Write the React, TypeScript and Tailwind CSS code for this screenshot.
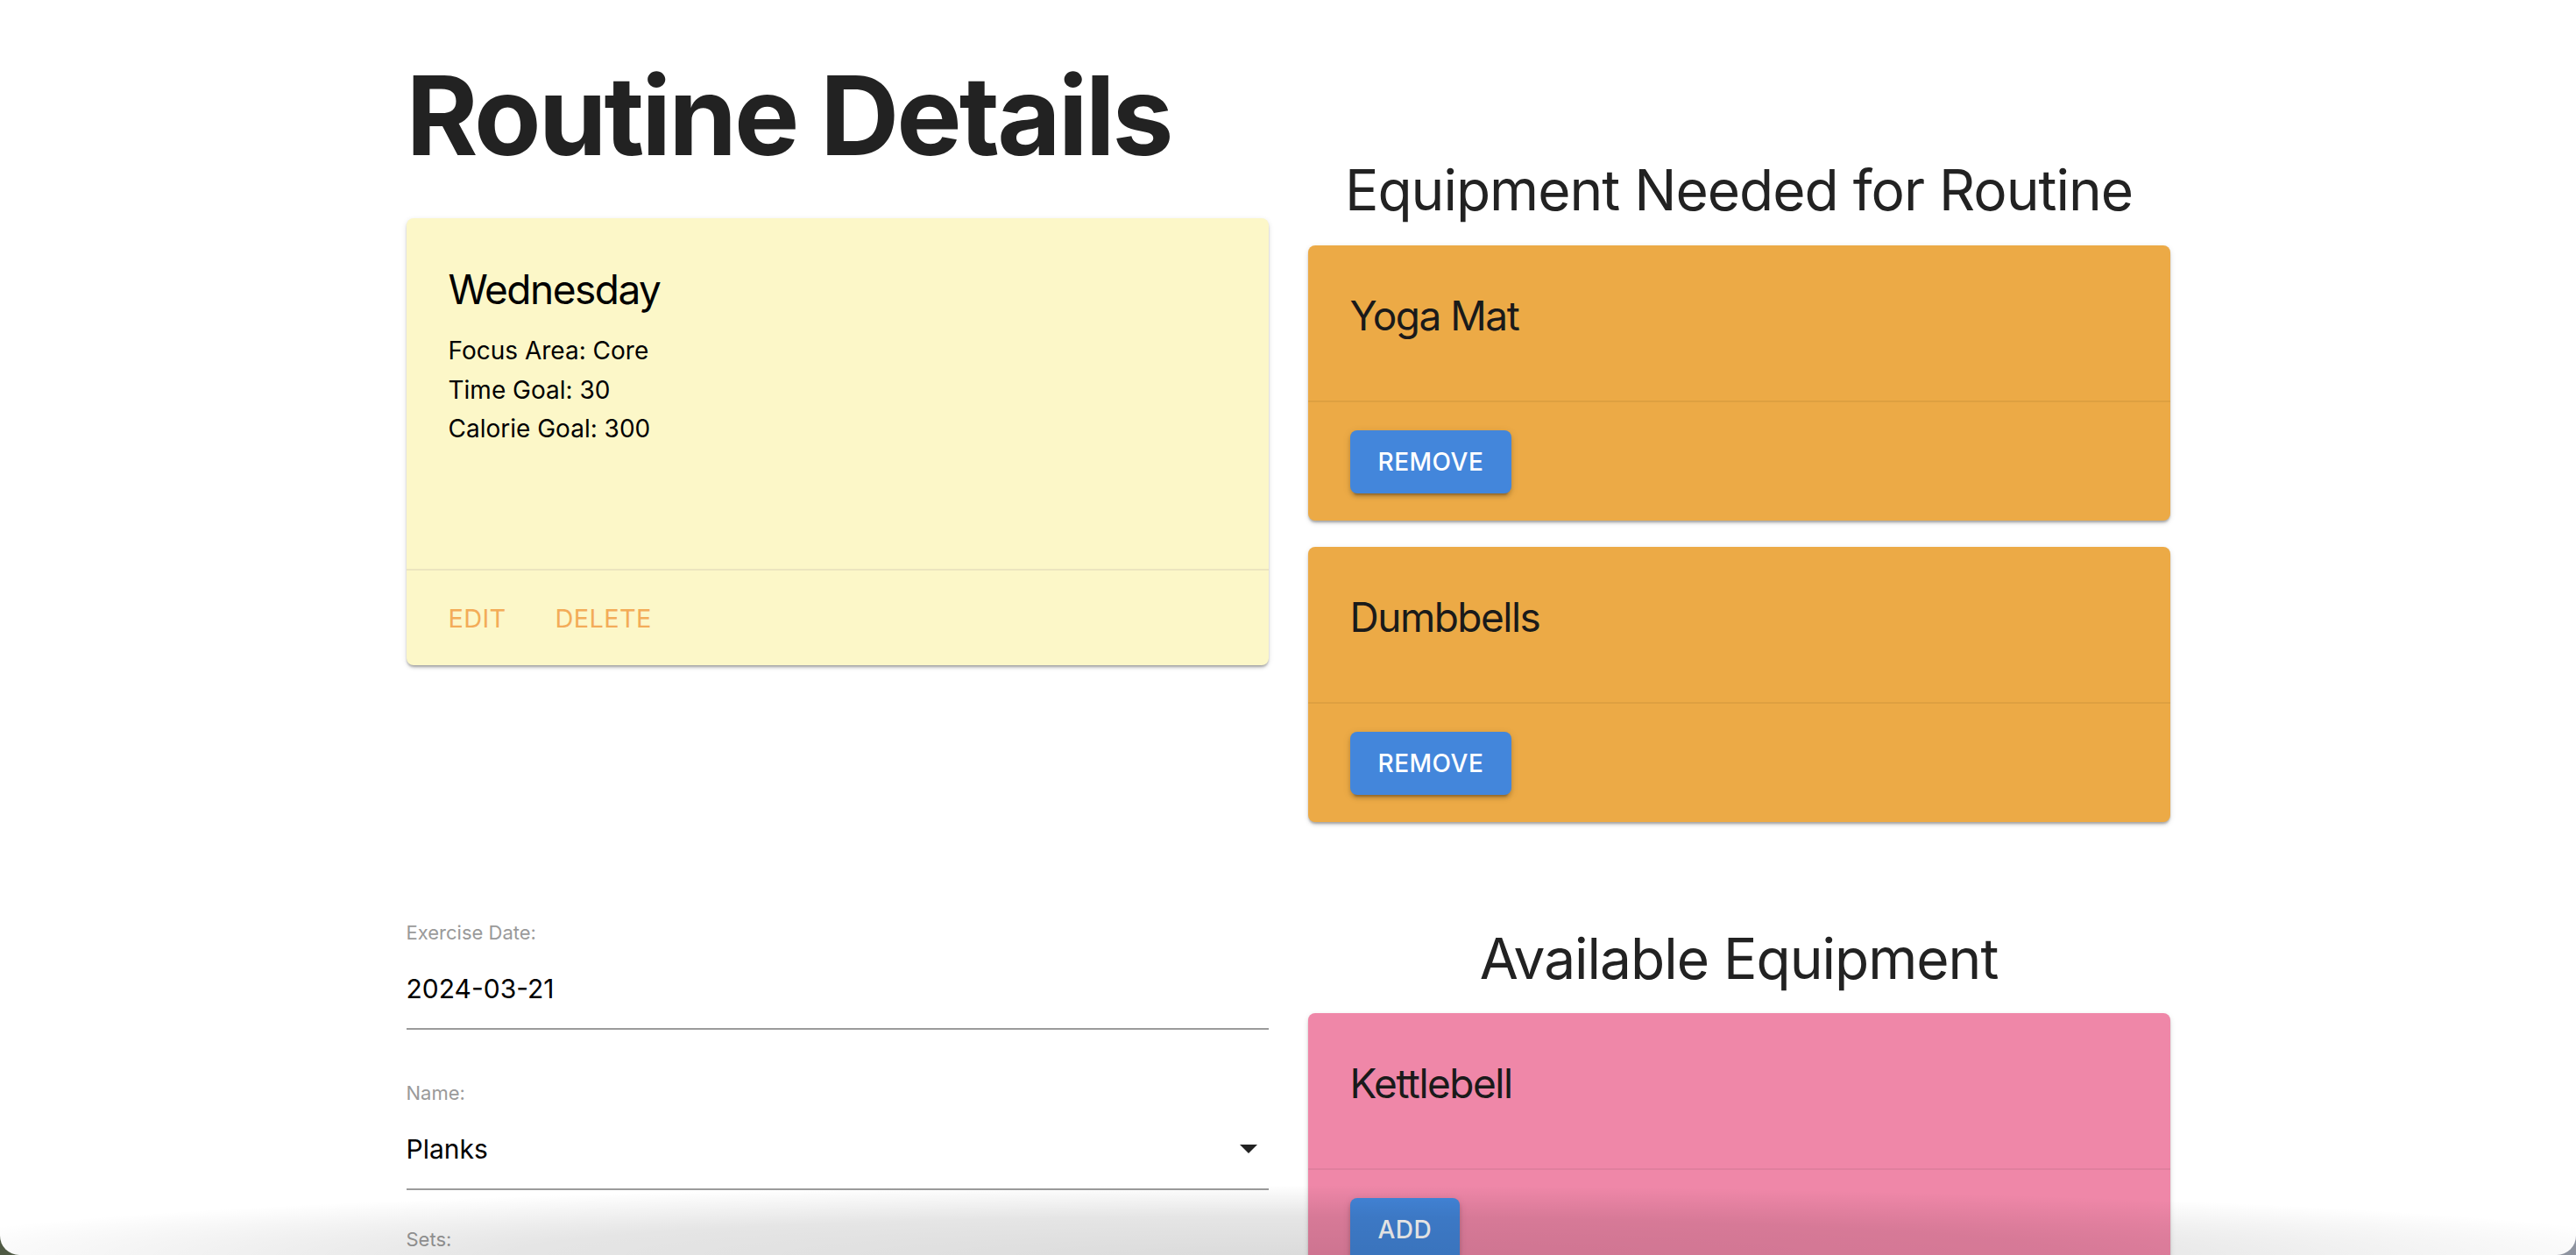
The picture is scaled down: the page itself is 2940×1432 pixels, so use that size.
import React from "react";

const FONT = "font-['Inter','Noto_Sans',sans-serif]";

type Item = { name: string };

const needed: Item[] = [{ name: "Yoga Mat" }, { name: "Dumbbells" }];
const available: Item[] = [{ name: "Kettlebell" }];

function ContainedButton({ label }: { label: string }) {
  return (
    <button className="flex h-[72px] items-center rounded-lg bg-[#4386db] px-8 text-[28px] font-medium leading-none tracking-[0.5px] text-white shadow-[0_6px_2px_-4px_rgba(0,0,0,0.2),0_4px_4px_0_rgba(0,0,0,0.14),0_2px_10px_0_rgba(0,0,0,0.12)]">
      {label}
    </button>
  );
}

function EquipmentCard({ name, color, action }: { name: string; color: string; action: string }) {
  return (
    <div
      className={`overflow-hidden rounded-lg shadow-[0_4px_4px_-2px_rgba(0,0,0,0.2),0_2px_2px_0_rgba(0,0,0,0.14),0_2px_6px_0_rgba(0,0,0,0.12)] ${color}`}
    >
      <div className="h-[177px] px-12 pt-[48px]">
        <h3 className="text-[46px] leading-[64px] font-normal tracking-[-1.5px] text-[#1a1a1a]">{name}</h3>
      </div>
      <div className="flex h-[137px] items-center border-t-2 border-black/[0.06] px-12">
        <ContainedButton label={action} />
      </div>
    </div>
  );
}

function Field({ label, value, select }: { label: string; value: string; select?: boolean }) {
  return (
    <div className="border-b-2 border-[#9b9b9b]">
      <div className="text-[22px] leading-[22px] text-[#9a9a9a]">{label}</div>
      <div className="mt-[38px] flex items-center justify-between pb-[30px]">
        <span className="text-[30px] leading-[30px] text-black">{value}</span>
        {select && (
          <svg width="20" height="10" viewBox="0 0 20 10" className="mr-[13px]">
            <path d="M0 0h20L10 10z" fill="#222" />
          </svg>
        )}
      </div>
    </div>
  );
}

export default function App() {
  return (
    <div className={`h-[1432px] overflow-hidden bg-gradient-to-r from-[#4f5a44] to-[#8e94a0] ${FONT}`}>
      <div className="relative h-full overflow-hidden rounded-b-[22px] bg-white">
        <main className="mx-auto grid w-[2013px] grid-cols-2 gap-x-[45px] pt-[69px]">
          {/* Row 1 left: title + routine card */}
          <section>
            <h1 className="text-[125px] leading-[125px] font-bold tracking-[-3px] text-[#222]">
              Routine Details
            </h1>
            <div className="mt-[55px] overflow-hidden rounded-lg bg-[#fcf7c8] shadow-[0_4px_4px_-2px_rgba(0,0,0,0.2),0_2px_2px_0_rgba(0,0,0,0.14),0_2px_6px_0_rgba(0,0,0,0.12)]">
              <div className="h-[400px] px-12 pt-[49px]">
                <h2 className="text-[46px] leading-[64px] tracking-[-1.5px] text-black">Wednesday</h2>
                <div className="mt-4 text-[28px] leading-[44.5px] text-black">
                  <p>Focus Area: Core</p>
                  <p>Time Goal: 30</p>
                  <p>Calorie Goal: 300</p>
                </div>
              </div>
              <div className="flex h-[110px] items-center gap-[56px] border-t-2 border-[#ece5bf] px-12 text-[29px] leading-none tracking-[0.3px] text-[#f3ac58]">
                <button>EDIT</button>
                <button>DELETE</button>
              </div>
            </div>
          </section>

          {/* Row 1 right: equipment needed */}
          <section className="pt-[116px]">
            <h2 className="text-center text-[64px] leading-[64px] tracking-[-1px] text-[#222]">
              Equipment Needed for Routine
            </h2>
            <div className="mt-[31px] flex flex-col gap-[30px]">
              {needed.map((item) => (
                <EquipmentCard key={item.name} name={item.name} color="bg-[#ecaa46]" action="REMOVE" />
              ))}
            </div>
          </section>

          {/* Row 2 left: exercise form */}
          <section className="pt-[115px]">
            <Field label="Exercise Date:" value="2024-03-21" />
            <div className="mt-[61px]">
              <Field label="Name:" value="Planks" select />
            </div>
            <div className="mt-[45px]">
              <Field label="Sets:" value="3" />
            </div>
          </section>

          {/* Row 2 right: available equipment */}
          <section className="pt-[124px]">
            <h2 className="text-center text-[64px] leading-[64px] tracking-[-1px] text-[#222]">
              Available Equipment
            </h2>
            <div className="mt-[30px] flex flex-col gap-[30px]">
              {available.map((item) => (
                <EquipmentCard key={item.name} name={item.name} color="bg-[#ef87a8]" action="ADD" />
              ))}
            </div>
          </section>
        </main>

        {/* window bottom shading */}
        <div className="pointer-events-none absolute inset-x-0 bottom-0 h-[80px] bg-[radial-gradient(ellipse_55%_100%_at_50%_100%,rgba(0,0,0,0.14),rgba(0,0,0,0.1)_55%,transparent)]" />
      </div>
    </div>
  );
}
